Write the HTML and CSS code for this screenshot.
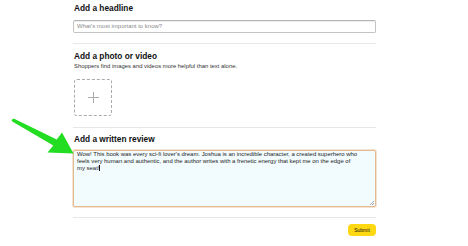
FILE: index.html
```html
<!DOCTYPE html>
<html>
<head>
<meta charset="utf-8">
<link rel="stylesheet" href="styles.css">
</head>
<body>
<div class="page">
  <div class="form">
    <h2 class="heading first">Add a headline</h2>
    <div class="input">What's most important to know?</div>
    <hr class="divider">
    <h2 class="heading">Add a photo or video</h2>
    <p class="sub">Shoppers find images and videos more helpful than text alone.</p>
    <div class="upload"><span class="plus"></span></div>
    <hr class="divider d2">
    <h2 class="heading h3">Add a written review</h2>
    <div class="textarea">Wow! This book was every sci-fi lover's dream. Joshua is an incredible character, a created superhero who<br>feels very human and authentic, and the author writes with a frenetic energy that kept me on the edge of<br>my seat!<span class="caret"></span>
      <svg class="grip" width="5" height="5" viewBox="0 0 5 5"><path d="M1 5 L5 1 M3 5 L5 3" stroke="#888" stroke-width="0.7"/></svg>
    </div>
    <hr class="divider d3">
    <div class="actions"><button class="submit">Submit</button></div>
  </div>
  <svg class="arrow" width="80" height="60" viewBox="0 0 80 60">
    <polygon points="13.7,8.4 56.7,29.4 62,22.5 73.5,43.5 47.5,42.5 53.3,35.6 12.3,11.6 11.5,10" fill="#22dd22"/>
  </svg>
</div>
</body>
</html>
```
FILE: styles.css
```css
html, body { margin: 0; padding: 0; background: #fff; }
body { font-family: "Liberation Sans", Arial, sans-serif; color: #0f1111; }
.page { position: relative; width: 468px; height: 246px; overflow: hidden; }
.form { margin-left: 73px; width: 303px; display: flex; flex-direction: column; }
.heading { margin: 7px 0 0 1px; font-size: 8.3px; line-height: 10px; font-weight: 700; height: 10px; }
.heading.first { margin-top: 3px; }
.heading.h3 { margin-top: 6px; }
.input { margin-top: 7px; height: 11px; border: 1px solid #c4c4c4; border-top-color: #b4b4b4; border-radius: 2px; box-shadow: inset 0 1px 1px rgba(15,17,17,0.08); font-size: 6px; line-height: 11px; padding-left: 3px; color: #8a8a8a; }
.divider { margin: 10px 0 0 0; border: 0; height: 1px; background: #e7e7e7; }
.divider.d2 { margin-top: 11px; }
.sub { margin: 2px 0 0 1px; font-size: 5.9px; line-height: 7px; color: #333; }
.upload { margin: 9px 0 0 1px; width: 36px; height: 35px; border: 1px dashed #aaa; border-radius: 3px; display: flex; align-items: center; justify-content: center; }
.plus { position: relative; width: 11px; height: 11px; }
.plus::before, .plus::after { content: ""; position: absolute; background: #aaa; }
.plus::before { left: 5px; top: 0; width: 1px; height: 11px; }
.plus::after { top: 5px; left: 0; width: 11px; height: 1px; }
.textarea { position: relative; margin-top: 6px; border: 1px solid #e3b98f; border-radius: 2px; box-shadow: 0 0 0 1px #f5e3d2; background: #f2fcff; font-size: 5.95px; line-height: 7px; padding: 0 0 0 3px; box-sizing: border-box; height: 57px; color: #222; white-space: nowrap; }
.caret { display: inline-block; width: 0.6px; height: 6px; background: #111; vertical-align: -1px; }
.grip { position: absolute; right: 1px; bottom: 1px; }
.divider.d3 { margin-top: 10px; }
.actions { display: flex; justify-content: flex-end; margin-top: 6px; }
.submit { height: 12px; width: 28px; padding: 0; border: 0; border-radius: 4px; background: #ffd814; font-family: "Liberation Sans", Arial, sans-serif; font-size: 5px; color: #0f1111; line-height: 12px; }
.arrow { position: absolute; left: 0; top: 110px; }
```
